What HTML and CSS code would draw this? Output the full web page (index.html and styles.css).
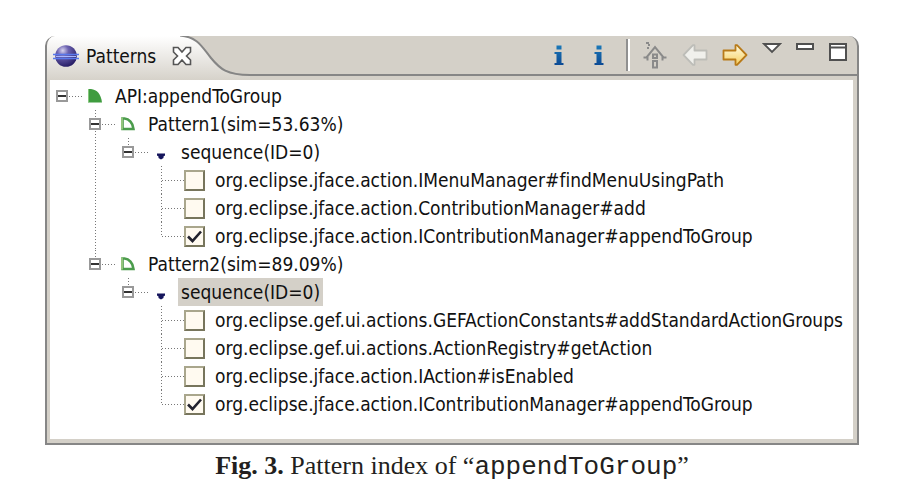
FILE: index.html
```html
<!DOCTYPE html>
<html lang="en">
<head>
<meta charset="utf-8">
<title>Patterns</title>
<link rel="stylesheet" href="styles.css">
</head>
<body>
<svg class="defs" aria-hidden="true">
  <defs>
    <linearGradient id="tab-fill" x1="0" y1="0" x2="0" y2="1"><stop offset="0" stop-color="#fff"/><stop offset="1" stop-color="#d6d2ca"/></linearGradient>
    <radialGradient id="orb" cx=".35" cy=".25" r=".75"><stop offset="0" stop-color="#d8d4f0"/><stop offset=".35" stop-color="#6c62b0"/><stop offset="1" stop-color="#2a2068"/></radialGradient>
    <linearGradient id="gold" x1="0" y1="0" x2="0" y2="1"><stop offset="0" stop-color="#fffbe0"/><stop offset="1" stop-color="#f6cf60"/></linearGradient>
    <linearGradient id="blue" x1="0" y1="0" x2="0" y2="1"><stop offset="0" stop-color="#1a78b8"/><stop offset="1" stop-color="#0c4a94"/></linearGradient>
    <symbol id="info" viewBox="0 0 14 22"><path fill="url(#blue)" d="M4.500 1.500h5v4h-5zM2.500 8h7v11h2v2h-9v-2h2v-9h-2z"/></symbol>
    <symbol id="arrow" viewBox="0 0 26 24"><path stroke-width="1.800" stroke-linejoin="round" d="M1.500 7.500h12V2.200h1.500L24.500 12 15 21.800h-1.500V16.500h-12z"/></symbol>
    <symbol id="quarter" viewBox="0 0 16 16"><path fill="#3f9c3f" d="M1 1h3C10 1.500 14 6 15 14.500H1z"/><path stroke="#86c77c" d="M1.500 1v13"/></symbol>
    <symbol id="quarter-open" viewBox="0 0 16 16"><path fill="#fff" stroke="#4b9c4c" stroke-width="2.600" d="M2.500 2.500h2C9 3 13 7 13.500 13h-11z"/><path stroke="#93c47c" stroke-width="2" d="M2 1.500v12"/></symbol>
    <symbol id="marker" viewBox="0 0 16 16"><path fill="#15155c" d="M4 9.500h8v2l-1.500 1V14L8 15.500 5.500 14v-1.500L4 11.500z"/></symbol>
  </defs>
</svg>
<figure class="figure">
  <section class="view" aria-label="Patterns">
    <header class="bar">
      <div class="tab">
        <svg class="logo" viewBox="0 0 26 24"><circle cx="13" cy="12" r="10.800" fill="url(#orb)"/><path stroke="#5878ec" stroke-width="1.600" d="M0 10.500h26M0 14.500h26"/><path stroke="#a9b8ff" d="M3 12.500h20"/></svg>
        <span class="title">Patterns</span>
        <button class="close" aria-label="Close"><svg viewBox="0 0 20 20"><path fill="#fff" stroke="#555" stroke-width="1.600" d="M1.500 1.500H6L10 6l4-4.500h4.500V6L14.500 10l4 4v4.500H14L10 14l-4 4.500H1.500V14l4-4-4-4z"/></svg></button>
      </div>
      <svg class="curve" viewBox="0 0 70 44"><path fill="url(#tab-fill)" d="M0 0C18 1 22 11 31 22S47 40 70 40V44H0z"/><path fill="none" stroke="#858585" stroke-width="2" d="M0 -.5C18 1 22 11 31 22S47 39 70 39"/></svg>
      <div class="tools">
        <button class="tool" aria-label="Information"><svg class="i"><use href="#info"/></svg></button>
        <button class="tool" aria-label="Details"><svg class="i"><use href="#info"/></svg></button>
        <span class="divider"></span>
        <button class="tool home" aria-label="Home"><svg class="wide" viewBox="0 0 26 28"><path fill="none" stroke="#8a8a8a" stroke-width="2" d="M1.500 16.500h3L13 6l8.500 10.500h3M5.500 16v3.500M20.500 16v3.500"/><path fill="none" stroke="#8a8a8a" stroke-width="2" d="M11 13.500h4v3.500h-4zM11 20h4v6.500h-4zM4 2h3M8 4H6M5 7h2"/></svg></button>
        <button class="tool back" aria-label="Back"><svg class="wide"><use href="#arrow" transform="translate(26 0) scale(-1 1)"/></svg></button>
        <button class="tool next" aria-label="Forward"><svg class="wide"><use href="#arrow"/></svg></button>
        <button class="tool high" aria-label="View menu"><svg class="win" viewBox="0 0 20 20"><path fill="#fff" stroke="#505050" stroke-width="1.800" d="M2 2h16l-8 8z"/></svg></button>
        <button class="tool high" aria-label="Minimize"><svg class="win" viewBox="0 0 20 20"><path fill="#fff" stroke="#505050" stroke-width="2" d="M2 2h16v5H2z"/></svg></button>
        <button class="tool high" aria-label="Maximize"><svg class="win" viewBox="0 0 20 20"><path fill="#fff" stroke="#505050" stroke-width="2" d="M2 2h16v16H2zM2 5.500h16"/></svg></button>
      </div>
    </header>
    <div class="client">
      <ul class="tree">
        <li>
          <div class="row"><button class="toggle" aria-label="Collapse"></button><i class="dots"></i><svg class="icon"><use href="#quarter"/></svg><span class="name">API:appendToGroup</span></div>
          <ul>
            <li>
              <div class="row"><button class="toggle" aria-label="Collapse"></button><i class="dots"></i><svg class="icon"><use href="#quarter-open"/></svg><span class="name">Pattern1(sim=53.63%)</span></div>
              <ul>
                <li>
                  <div class="row"><button class="toggle" aria-label="Collapse"></button><i class="dots"></i><svg class="icon"><use href="#marker"/></svg><span class="name">sequence(ID=0)</span></div>
                  <ul>
                    <li><label class="row leaf"><i class="dots"></i><input type="checkbox"><span class="name">org.eclipse.jface.action.IMenuManager#findMenuUsingPath</span></label></li>
                    <li><label class="row leaf"><i class="dots"></i><input type="checkbox"><span class="name">org.eclipse.jface.action.ContributionManager#add</span></label></li>
                    <li><label class="row leaf"><i class="dots"></i><input type="checkbox" checked><span class="name">org.eclipse.jface.action.IContributionManager#appendToGroup</span></label></li>
                  </ul>
                </li>
              </ul>
            </li>
            <li>
              <div class="row"><button class="toggle" aria-label="Collapse"></button><i class="dots"></i><svg class="icon"><use href="#quarter-open"/></svg><span class="name">Pattern2(sim=89.09%)</span></div>
              <ul>
                <li>
                  <div class="row"><button class="toggle" aria-label="Collapse"></button><i class="dots"></i><svg class="icon"><use href="#marker"/></svg><span class="name selected">sequence(ID=0)</span></div>
                  <ul>
                    <li><label class="row leaf"><i class="dots"></i><input type="checkbox"><span class="name">org.eclipse.gef.ui.actions.GEFActionConstants#addStandardActionGroups</span></label></li>
                    <li><label class="row leaf"><i class="dots"></i><input type="checkbox"><span class="name">org.eclipse.gef.ui.actions.ActionRegistry#getAction</span></label></li>
                    <li><label class="row leaf"><i class="dots"></i><input type="checkbox"><span class="name">org.eclipse.jface.action.IAction#isEnabled</span></label></li>
                    <li><label class="row leaf"><i class="dots"></i><input type="checkbox" checked><span class="name">org.eclipse.jface.action.IContributionManager#appendToGroup</span></label></li>
                  </ul>
                </li>
              </ul>
            </li>
          </ul>
        </li>
      </ul>
    </div>
  </section>
  <figcaption><b>Fig. 3.</b> Pattern index of “<code>appendToGroup</code>”</figcaption>
</figure>
</body>
</html>
```

FILE: styles.css
```css
* { box-sizing: border-box; }
body { margin: 0; background: #fff; color: #111; }
.defs { position: absolute; width: 0; height: 0; }
.figure { margin: 36px 45px 0; }
button { margin: 0; padding: 0; border: 0; background: none; }
svg { display: block; flex: none; }

.view {
  overflow: hidden;
  border: 2px solid #868686;
  border-top: 0;
  border-radius: 10px 10px 0 0;
  background: #d4d0c8;
  font: 19px/28px "DejaVu Sans Condensed", "DejaVu Sans", sans-serif;
  font-stretch: condensed;
  font-variant-ligatures: none;
}
.bar { display: flex; height: 44px; }
.tab {
  display: flex;
  align-items: center;
  padding: 0 0 4px 6px;
  background: linear-gradient(#fff, #d6d2ca);
}
.logo { width: 26px; height: 24px; }
.title { margin: 0 16px 0 7px; }
.close { position: relative; margin-right: -12px; }
.close, .close svg { width: 20px; height: 20px; }
.curve { width: 70px; height: 44px; }
.tools {
  flex: 1;
  display: flex;
  justify-content: flex-end;
  align-items: center;
  height: 40px;
  padding-right: 3px;
  border-bottom: 2px solid #868686;
}
.tool { display: flex; justify-content: center; width: 40px; }
.i { width: 14px; height: 22px; }
.wide { width: 26px; height: 24px; }
.home .wide { height: 28px; }
.divider { width: 4px; height: 32px; margin: 0 5px 0 7px; border-left: 2px solid #909090; border-right: 2px solid #fff; }
.back { fill: #f0f0ec; stroke: #bdbdb8; }
.next { fill: url(#gold); stroke: #b87a18; }
.high { align-self: flex-start; width: 33px; padding-top: 6px; }
.win { width: 20px; height: 20px; }

.client { margin: 0 4px 4px 3px; padding: 2px 0 21px 6px; background: #fff; }
.tree, .tree ul { margin: 0; padding: 0; list-style: none; }
.tree ul { margin-left: 33px; }
.tree ul > li {
  background: repeating-linear-gradient(#777 0 1px, transparent 1px 3px) 6px 0 / 1px 100% no-repeat;
}
.tree ul > li:last-child { background-size: 1px 15px; }
.row { display: flex; align-items: center; height: 28px; }
.toggle {
  width: 12px;
  height: 12px;
  border: 2px solid #999;
  background: linear-gradient(#333, #333) center / 8px 2px no-repeat #fff;
}
.dots {
  width: 14px;
  height: 1px;
  margin: 0 4px 0 1px;
  background: repeating-linear-gradient(90deg, #777 0 1px, transparent 1px 3px);
}
.icon { width: 16px; height: 16px; }
.name { padding: 0 3px; margin-left: 9px; white-space: nowrap; }
.selected { background: #d4d0c8; }
.leaf .dots { width: 22px; margin: 0 0 0 7px; }
.leaf .name { margin-left: 7px; }
input {
  appearance: none;
  width: 21px;
  height: 21px;
  margin: 0;
  border: 2px solid;
  border-color: #a9a68c #77755c #77755c #a9a68c;
  background: #fffaf0;
}
input:checked {
  background-image: url("data:image/svg+xml,%3Csvg xmlns='http://www.w3.org/2000/svg' viewBox='0 0 17 17'%3E%3Cpath d='M2 8.500l4.500 4.500L15 3.500' fill='none' stroke='%2322222e' stroke-width='2.600'/%3E%3C/svg%3E");
}
figcaption {
  margin-top: 4px;
  text-align: center;
  color: #231f20;
  font: 26px/34px "Liberation Serif", serif;
}
code { font: 26px/34px "Liberation Mono", monospace; }
```
